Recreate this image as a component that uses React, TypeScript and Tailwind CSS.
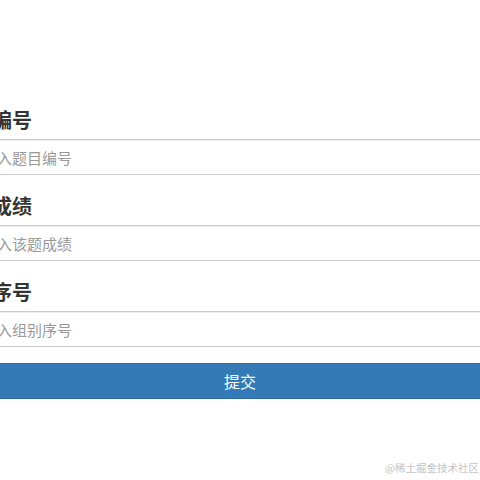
import React from "react";

const fields = [
  { label: "题目编号", placeholder: "请输入题目编号" },
  { label: "题目成绩", placeholder: "请输入该题成绩" },
  { label: "组别序号", placeholder: "请输入组别序号" },
];

const App = () => {
  return (
    <div
      className="relative w-[480px] h-[480px] overflow-hidden bg-white"
      style={{ fontFamily: '"Noto Sans CJK SC", "Noto Sans", sans-serif' }}
    >
      <div className="w-[576px] -ml-[48px] pt-[106px] flex flex-col">
        {fields.map((f) => (
          <div key={f.label} className="flex flex-col mb-[17px]">
            <label className="text-[20px] leading-[28px] font-bold text-[#333] mb-[5px]">
              {f.label}
            </label>
            <input
              type="text"
              placeholder={f.placeholder}
              className="h-[36px] px-[14px] border border-[#ccc] rounded-[4px] text-[15px] text-[#555] placeholder:text-[#999] shadow-[inset_0_1px_1px_rgba(0,0,0,0.075)] outline-none bg-white"
            />
          </div>
        ))}
        <button className="h-[36px] -mt-px bg-[#337ab7] border border-[#2e6da4] rounded-[4px] text-white text-[16px] leading-[34px]">
          提交
        </button>
      </div>
      <div className="absolute right-[1px] bottom-[5px] text-[10.5px] leading-[14px] text-[#c4c4c4]">
        @稀土掘金技术社区
      </div>
    </div>
  );
};

export default App;
